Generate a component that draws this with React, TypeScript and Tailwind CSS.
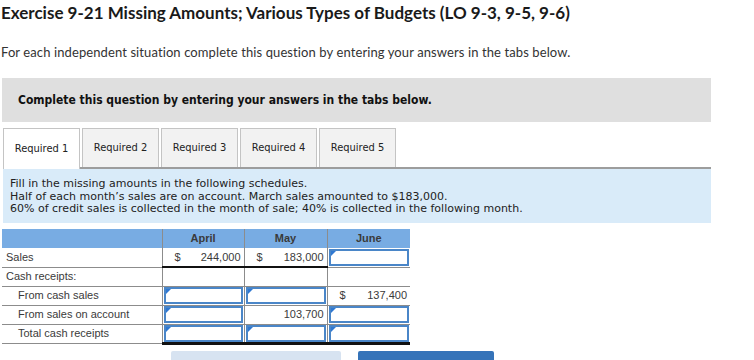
import React from 'react';

const tahoma = { fontFamily: '"DejaVu Sans Condensed", "DejaVu Sans", sans-serif' };
const verdana = { fontFamily: '"DejaVu Sans", sans-serif' };

const Marker = () => (
  <span className="absolute left-0 top-0 w-0 h-0 border-t-[5px] border-r-[5px] border-t-[#2f78d2] border-r-transparent" />
);

const InputCell = () => (
  <div className="relative h-[17px] mx-[1px] border-2 border-[#4a86c8] bg-white">
    <Marker />
  </div>
);

const Money = ({ value, dollar }: { value: string; dollar?: boolean }) => (
  <div className="flex justify-between px-[3px] pl-[12px]">
    <span>{dollar ? '$' : ''}</span>
    <span>{value}</span>
  </div>
);

export default function App() {
  const tabs = ['Required 1', 'Required 2', 'Required 3', 'Required 4', 'Required 5'];

  return (
    <div className="w-[754px] h-[360px] overflow-hidden bg-white text-[#222]">
      <h1 className="pt-[3px] pl-[1px] text-[17px] leading-[20px] font-bold text-[#1a1a1a]" style={{ fontFamily: 'Lato, sans-serif' }}>
        Exercise 9-21 Missing Amounts; Various Types of Budgets (LO 9-3, 9-5, 9-6)
      </h1>
      <p className="mt-[21px] pl-[1px] text-[13px] leading-[16px] tracking-[0.1px] text-[#333]" style={{ fontFamily: 'Lato, sans-serif' }}>
        For each independent situation complete this question by entering your answers in the tabs below.
      </p>

      <div className="mt-[18px] ml-[2px] w-[709px] h-[44px] bg-[#dfdfdf] flex items-center pl-[16px]">
        <span className="text-[12px] font-bold text-[#111]" style={tahoma}>
          Complete this question by entering your answers in the tabs below.
        </span>
      </div>

      <div className="mt-[6px] ml-[3px] w-[708px] flex gap-[2px] border-b-2 border-[#9d9d9d]">
        {tabs.map((t, i) => (
          <div
            key={t}
            className={
              'w-[77px] h-[39px] flex items-center justify-center border border-b-0 border-[#c4c4c4] text-[11px] text-[#222] ' +
              (i === 0 ? 'bg-white -mb-[2px] h-[41px]' : 'bg-[#f2f2f2]')
            }
            style={tahoma}
          >
            {t}
          </div>
        ))}
      </div>

      <div className="ml-[3px] w-[708px] h-[54px] bg-[#d9ebf9] pt-[9px] pl-[7px] text-[11px] leading-[12.5px] text-[#222]" style={verdana}>
        <div>Fill in the missing amounts in the following schedules.</div>
        <div>Half of each month’s sales are on account. March sales amounted to $183,000.</div>
        <div>60% of credit sales is collected in the month of sale; 40% is collected in the following month.</div>
      </div>

      <table
        className="mt-[6px] ml-[2px] border-collapse table-fixed text-[11px] text-[#3a3a3a]"
        style={{ fontFamily: '"Liberation Sans", Arial, sans-serif' }}
      >
        <colgroup>
          <col className="w-[160px]" />
          <col className="w-[82px]" />
          <col className="w-[83px]" />
          <col className="w-[83px]" />
        </colgroup>
        <thead>
          <tr className="h-[19px] bg-[#78ace3]">
            <th className="border-r border-[#8c8c8c]" />
            <th className="font-bold text-center border-r border-[#8c8c8c]">April</th>
            <th className="font-bold text-center border-r border-[#8c8c8c]">May</th>
            <th className="font-bold text-center">June</th>
          </tr>
        </thead>
        <tbody>
          <tr className="h-[19px]">
            <td className="pl-[4px] border-b border-r border-[#8c8c8c]">Sales</td>
            <td className="p-0 border-b-2 border-b-[#111] border-r border-r-[#8c8c8c]">
              <Money dollar value="244,000" />
            </td>
            <td className="p-0 border-b-2 border-b-[#111] border-r border-r-[#8c8c8c]">
              <Money dollar value="183,000" />
            </td>
            <td className="p-0 border-b border-[#8c8c8c]">
              <InputCell />
            </td>
          </tr>
          <tr className="h-[19px]">
            <td className="pl-[4px] border-b border-r border-[#8c8c8c]">Cash receipts:</td>
            <td className="border-b border-r border-[#8c8c8c]" />
            <td className="border-b border-r border-[#8c8c8c]" />
            <td className="border-b border-[#8c8c8c]" />
          </tr>
          <tr className="h-[19px]">
            <td className="pl-[16px] border-b border-r border-[#8c8c8c]">From cash sales</td>
            <td className="p-0 border-b border-r border-[#8c8c8c]">
              <InputCell />
            </td>
            <td className="p-0 border-b border-r border-[#8c8c8c]">
              <InputCell />
            </td>
            <td className="p-0 border-b border-[#8c8c8c]">
              <Money dollar value="137,400" />
            </td>
          </tr>
          <tr className="h-[19px]">
            <td className="pl-[16px] border-b border-r border-[#8c8c8c]">From sales on account</td>
            <td className="p-0 border-b border-r border-[#8c8c8c]">
              <InputCell />
            </td>
            <td className="p-0 border-b border-r border-[#8c8c8c]">
              <Money value="103,700" />
            </td>
            <td className="p-0 border-b border-[#8c8c8c]">
              <InputCell />
            </td>
          </tr>
          <tr className="h-[19px]">
            <td className="pl-[16px] border-b border-r border-[#8c8c8c]">Total cash receipts</td>
            <td className="p-0 border-b-[3px] border-b-[#111] border-r border-r-[#8c8c8c]">
              <InputCell />
            </td>
            <td className="p-0 border-b-[3px] border-b-[#111] border-r border-r-[#8c8c8c]">
              <InputCell />
            </td>
            <td className="p-0 border-b-[3px] border-b-[#111]">
              <InputCell />
            </td>
          </tr>
        </tbody>
      </table>

      <div className="mt-[6px] flex gap-[17px] pl-[171px]">
        <div className="w-[170px] h-[20px] rounded-t-[2px] bg-[#d7e3f1]" />
        <div className="w-[136px] h-[20px] rounded-t-[2px] bg-[#3573b9]" />
      </div>
    </div>
  );
}
